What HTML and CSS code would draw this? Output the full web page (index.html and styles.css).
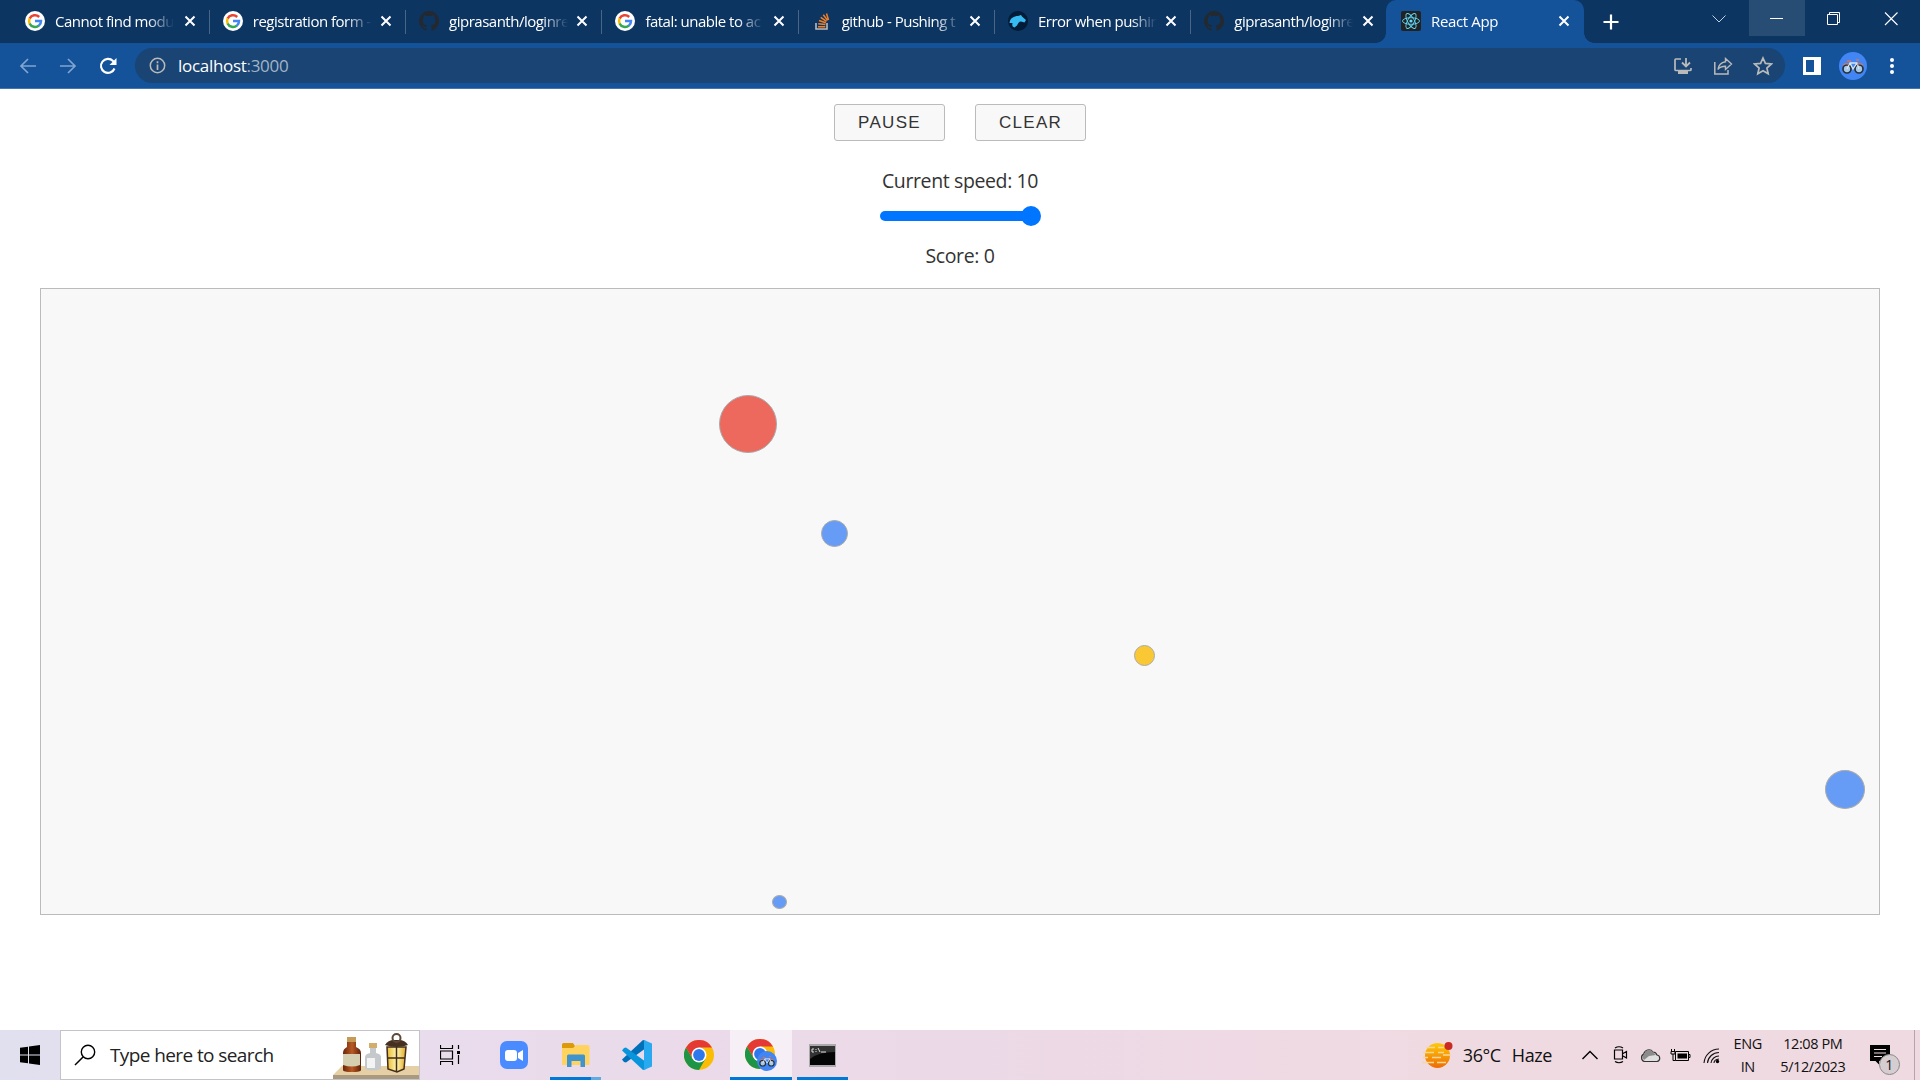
FILE: index.html
```html
<!DOCTYPE html>
<html lang="en">
<head>
<meta charset="utf-8">
<title>React App</title>
<link rel="stylesheet" href="styles.css">
</head>
<body>
<svg width="0" height="0" class="defs">
  <defs>
    <symbol id="google" viewBox="0 0 20 20"><circle cx="10" cy="10" r="10" fill="#fff"/><g fill="none" stroke-width="2.5"><path d="M14.2 6A6 6 0 0 0 4.6 7.6" stroke="#ea4335"/><path d="M4.7 7.4a6 6 0 0 0 0 5.2" stroke="#fbbc05"/><path d="M4.6 12.4a6 6 0 0 0 9.4 2.1" stroke="#34a853"/><path d="M10 10h6a6 6 0 0 1-2.1 4.6" stroke="#4285f4"/></g></symbol>
    <symbol id="github" viewBox="0 0 16 16"><path fill="#24292f" d="M8 0a8 8 0 0 0-2.53 15.59c.4.07.55-.17.55-.38v-1.49c-2 .37-2.53-.49-2.69-.94-.09-.23-.48-.94-.82-1.13-.28-.15-.68-.52-.01-.53.63-.01 1.08.58 1.23.82.72 1.21 1.87.87 2.33.66.07-.52.28-.87.51-1.07-1.78-.2-3.64-.89-3.64-3.95 0-.87.31-1.59.82-2.15-.08-.2-.36-1.02.08-2.12 0 0 .67-.21 2.2.82a7.6 7.6 0 0 1 4 0c1.53-1.04 2.2-.82 2.2-.82.44 1.1.16 1.92.08 2.12.51.56.82 1.27.82 2.15 0 3.07-1.87 3.75-3.65 3.95.29.25.54.73.54 1.48v2.2c0 .21.15.46.55.38A8 8 0 0 0 8 0z"/></symbol>
    <symbol id="close" viewBox="0 0 12 12"><path d="M1.500 1.500l9 9m0-9l-9 9" fill="none" stroke="#fff" stroke-width="2"/></symbol>
    <symbol id="bike" viewBox="0 0 28 28"><circle cx="14" cy="14" r="14" fill="#4285f4"/><g fill="#a9c9e8" stroke="#263238" stroke-width="1.700"><circle cx="8" cy="17" r="4"/><circle cx="20" cy="17" r="4"/></g><path d="M8 17l3-6h7l2 6M11 11l3 6 4-6" fill="none" stroke="#d8e6ed" stroke-width="1.300"/><path d="M4 13q3-2.500 6-.5M18 12.500q3-2 6 .5M8 9h4M17 8h3" fill="none" stroke="#d87554" stroke-width="1.300"/></symbol>
    <symbol id="chrome" viewBox="0 0 30 30"><circle cx="15" cy="15" r="15" fill="#fbbc05"/><path d="M2 7.500A15 15 0 0 1 28 7.500H15L8.500 18.750z" fill="#e53935"/><path d="M2 7.500A15 15 0 0 0 15 30L21.500 18.750 15 22 8.500 18.750z" fill="#1e9447"/><circle cx="15" cy="15" r="7.500" fill="#fff"/><circle cx="15" cy="15" r="5.900" fill="#2f78eb"/></symbol>
  </defs>
</svg>

<header class="browser">
  <div class="tabstrip">
    <div class="tab"><svg class="fav"><use href="#google"/></svg><span class="label">Cannot find modu</span><svg class="x"><use href="#close"/></svg></div>
    <div class="tab"><svg class="fav"><use href="#google"/></svg><span class="label">registration form -</span><svg class="x"><use href="#close"/></svg></div>
    <div class="tab"><svg class="fav"><use href="#github"/></svg><span class="label">giprasanth/loginre</span><svg class="x"><use href="#close"/></svg></div>
    <div class="tab"><svg class="fav"><use href="#google"/></svg><span class="label">fatal: unable to ac</span><svg class="x"><use href="#close"/></svg></div>
    <div class="tab"><svg class="fav" viewBox="0 0 20 20"><path d="M4 12v6h11v-6" fill="none" stroke="#bcbbbb" stroke-width="1.600"/><path d="M6 15.700h7.300M6.200 12.700l7.200.8M7 9.500l6.800 2.200M8.700 6.300l5.800 4M11.300 3.800l4.300 5.600M14.500 2.500l2 6.500" stroke="#f48024" stroke-width="1.500"/></svg><span class="label">github - Pushing t</span><svg class="x"><use href="#close"/></svg></div>
    <div class="tab"><svg class="fav" viewBox="0 0 20 20"><circle cx="10" cy="10" r="10" fill="#021b36"/><path d="M1.500 12C2 7 6 5 10 5l3-1 1 1.500 4 3.500-1.500 2.500-3.500-1c-2 0-3 2-4 4l-2.500 2C4 16 4 14 4.500 12z" fill="#35baf1"/></svg><span class="label">Error when pushin</span><svg class="x"><use href="#close"/></svg></div>
    <div class="tab"><svg class="fav"><use href="#github"/></svg><span class="label">giprasanth/loginre</span><svg class="x"><use href="#close"/></svg></div>
    <div class="tab active"><svg class="fav" viewBox="0 0 20 20"><rect width="20" height="20" rx="2" fill="#222"/><g fill="none" stroke="#61dafb" stroke-width=".9"><ellipse cx="10" cy="10" rx="8.500" ry="3.300"/><ellipse cx="10" cy="10" rx="8.500" ry="3.300" transform="rotate(60 10 10)"/><ellipse cx="10" cy="10" rx="8.500" ry="3.300" transform="rotate(120 10 10)"/></g><circle cx="10" cy="10" r="1.600" fill="#61dafb"/></svg><span class="label">React App</span><svg class="x"><use href="#close"/></svg></div>
    <svg class="newtab" viewBox="0 0 16 16"><path d="M8 .5v15M.5 8h15" stroke="#fff" stroke-width="2.200"/></svg>
    <div class="wincontrols">
      <svg class="wc" viewBox="0 0 56 36"><path d="M19.500 15.500l6.500 6.500 6.500-6.500" fill="none" stroke="#c5d0dc"/></svg>
      <svg class="wc hover" viewBox="0 0 56 36"><path d="M21 18.500h13" stroke="#fff"/></svg>
      <svg class="wc" viewBox="0 0 56 36"><path d="M22.500 14.500h10v10h-10zM24.500 14v-1.500h10v10H33" fill="none" stroke="#fff"/></svg>
      <svg class="wc" viewBox="0 0 56 36"><path d="M24 12.500l12.500 12.500m0-12.500L24 25" stroke="#fff" stroke-width="1.100"/></svg>
    </div>
  </div>
  <div class="toolbar">
    <svg class="nav" viewBox="0 0 20 20"><path d="M18 10H3m7-7l-7 7 7 7" fill="none" stroke="#80a5d0" stroke-width="1.700"/></svg>
    <svg class="nav" viewBox="0 0 20 20"><path d="M2 10h15m-7-7l7 7-7 7" fill="none" stroke="#80a5d0" stroke-width="1.700"/></svg>
    <svg class="nav" viewBox="0 0 20 20"><path d="M16.500 12.500A7 7 0 1 1 15 5l2 2" fill="none" stroke="#fff" stroke-width="2.100"/><path d="M18.500 2v7h-7z" fill="#fff"/></svg>
    <div class="omnibox">
      <svg class="info" viewBox="0 0 17 17"><circle cx="8.500" cy="8.500" r="7.200" fill="none" stroke="#bababa" stroke-width="1.500"/><path d="M8.500 7.500V13M8.500 4.300v1.900" stroke="#bababa" stroke-width="1.700"/></svg>
      <span class="url">localhost<span class="port">:3000</span></span>
      <svg class="act" viewBox="0 0 20 20"><path d="M8 3H2.800Q2 3 2 4v9.500q0 1 1 1h14q1 0 1-1V12" fill="none" stroke="#bababa" stroke-width="1.700"/><path d="M5 15h10v3H5z" fill="#bababa"/><path d="M13 2v8m-4-3.500l4 4 4-4" fill="none" stroke="#bababa" stroke-width="1.800"/></svg>
      <svg class="act" viewBox="0 0 20 20"><path d="M1.800 6v12H15v-4" fill="none" stroke="#bababa" stroke-width="1.500"/><path d="M12.500 2.500l6 5.500-6 5.500v-3.200c-3.500 0-6 .8-7.500 3.200.5-4 3-7 7.500-7.700z" fill="none" stroke="#bababa" stroke-width="1.400"/></svg>
      <svg class="act" viewBox="0 0 20 20"><path d="M10 2l2.400 5.400 6 .6-4.500 4 1.300 5.800L10 14.800l-5.200 3L6.100 12 1.600 8l6-.6z" fill="none" stroke="#bababa" stroke-width="1.700"/></svg>
    </div>
    <svg class="panel" viewBox="0 0 18 18"><path d="M0 0h18v18H0zM3 3v12h8V3z" fill="#fff" fill-rule="evenodd"/></svg>
    <svg class="avatar"><use href="#bike"/></svg>
    <svg class="menu" viewBox="0 0 4 16"><circle cx="2" cy="2" r="2" fill="#fff"/><circle cx="2" cy="8" r="2" fill="#fff"/><circle cx="2" cy="14" r="2" fill="#fff"/></svg>
  </div>
</header>

<main class="game">
  <div class="buttons"><button class="btn">PAUSE</button><button class="btn">CLEAR</button></div>
  <div class="speed">Current speed: 10</div>
  <div class="slider"><span class="thumb"></span></div>
  <div class="score">Score: 0</div>
  <div class="field">
    <span class="dot red"></span>
    <span class="dot blue-mid"></span>
    <span class="dot yellow"></span>
    <span class="dot blue-big"></span>
    <span class="dot blue-small"></span>
  </div>
</main>

<footer class="taskbar">
  <div class="start"><svg width="20" height="20" viewBox="0 0 20 20"><path d="M0 2.800L8 1.700v7.800H0zM9 1.500L20 0v9.500H9zM0 10.500h8v7.800l-8-1.100zM9 10.500h11V20L9 18.500z"/></svg></div>
  <div class="search">
    <svg width="22" height="22" viewBox="0 0 22 22"><circle cx="14" cy="8" r="6.700" fill="none" stroke="#000" stroke-width="1.400"/><path d="M9.300 12.700L1 21" stroke="#000" stroke-width="1.500"/></svg>
    <span class="placeholder">Type here to search</span>
    <svg class="art" width="86" height="48" viewBox="0 0 86 48">
      <defs><linearGradient id="amber"><stop offset="0" stop-color="#6a2508"/><stop offset=".5" stop-color="#b85a25"/><stop offset="1" stop-color="#5f2007"/></linearGradient><linearGradient id="glow"><stop offset="0" stop-color="#e9b931"/><stop offset=".5" stop-color="#fff7b0"/><stop offset="1" stop-color="#dfa827"/></linearGradient></defs>
      <path d="M9 35h77v9H0z" fill="#e6cfa4"/><path d="M0 44h86v5H0z" fill="#ab997f"/>
      <path d="M14 10h9v6q5 2 5 6v17q0 2-9 2t-9-2V22q0-4 4-6z" fill="url(#amber)"/><path d="M14 6h9v5h-9z" fill="#c69b58"/><path d="M10 23h17v11q-8 3-17 0z" fill="#d5ceb0"/>
      <path d="M37 17h6v5q5 1 5 4v12q-8 3-16 0V26q0-3 5-4z" fill="#c5c9cb"/><path d="M36 12h8v5h-8z" fill="#d3ad6c"/><path d="M34 27h8v10h-8z" fill="#f3f3f3"/>
      <path d="M54 16h19l-2 22-7 3-9-3z" fill="url(#glow)"/><path d="M54 16h19l-2 22-7 3-9-3zM63.500 16v24M54 27h18" fill="none" stroke="#432c1c" stroke-width="1.500"/><path d="M52 14q3-5 9-5h5q6 0 9 5-11 4-23 0z" fill="#46301f"/><circle cx="63.500" cy="7" r="4" fill="none" stroke="#5d4837" stroke-width="2"/>
    </svg>
  </div>
  <div class="apps">
    <div class="app taskview"><svg width="20" height="20" viewBox="0 0 20 20"><path d="M.5 0v3.500h12V0M.5 20v-3.500h12V20M.5 6h12v8H.5zM18.500 0v4M18.500 10v9" fill="none" stroke="#000" stroke-width="1.200"/><path d="M17 6h3v3h-3z"/></svg></div>
    <div class="app"><svg width="28" height="28" viewBox="0 0 28 28"><rect width="28" height="28" rx="7" fill="#4a8cff"/><rect x="5" y="9" width="12" height="11" rx="3" fill="#fff"/><path d="M18 12l5-3v11l-5-3z" fill="#fff"/></svg></div>
    <div class="app folder"><svg width="28" height="24" viewBox="0 0 28 24"><path d="M0 1.500Q0 0 1.500 0H11l2 3v4H0z" fill="#dc9a08"/><path d="M0 5h11l3-3h12q1.500 0 1.500 2v18H0z" fill="#ffd35d"/><path d="M5 24V13q0-1.500 1.500-1.500h15q1.500 0 1.500 1.500v11h-4.500v-6h-9v6z" fill="#3f94cf"/></svg></div>
    <div class="app"><svg width="30" height="30" viewBox="0 0 30 30"><path d="M0 19.500L21 0l3 1v7L4 22.500 2 22z" fill="#0071b9"/><path d="M0 10.500L21 30l3-1v-7L4 7.500 2 8z" fill="#0995dc"/><path d="M22 0l8 3.500v23L22 30z" fill="#29a9ef"/></svg></div>
    <div class="app"><svg width="30" height="30"><use href="#chrome"/></svg></div>
    <div class="app current"><svg width="32" height="32" viewBox="0 0 32 32"><use href="#chrome" width="30" height="30"/><use href="#bike" x="12" y="12" width="20" height="20"/></svg></div>
    <div class="app open"><svg width="27" height="23" viewBox="0 0 27 23"><path d="M0 0h27v23H0z" fill="#aaa"/><path d="M1 2h25v19H1z" fill="#050505"/><path d="M1 2h25v6Q9 8 1 15z" fill="#333"/><path d="M5 5H3v3h2M7 5v1m0 1v1M9 4l2 4M12 8h5" fill="none" stroke="#ddd"/></svg></div>
  </div>
  <div class="weather"><svg width="31" height="27" viewBox="0 0 31 27"><defs><linearGradient id="sun" x2="0" y2="1"><stop stop-color="#ffca08"/><stop offset="1" stop-color="#ed6b05"/></linearGradient></defs><circle cx="15.500" cy="13.500" r="12.500" fill="url(#sun)"/><path d="M4 5.500h9M16 5.500h6M1 10.500h11M16 10.500h6M10 15.500h9M1 15.500h5M0 20.500h12M15 20.500h9M21 13h8" stroke="#f8d79a" stroke-width="1.600"/><circle cx="26.500" cy="4" r="4" fill="#c92a22"/></svg><span class="temp">36°C</span><span class="haze">Haze</span></div>
  <div class="tray">
    <svg width="18" height="12" viewBox="0 0 18 12"><path d="M1.500 10L9 2.500l7.500 7.500" fill="none" stroke="#000" stroke-width="1.400"/></svg>
    <svg class="camera" width="15" height="18" viewBox="0 0 15 18"><path d="M1.500 4h8v9h-8zM10 7.500l3.500-2v6.500L10 10M2 2q4-2.500 8 0M2 15.500q4 2.500 8 0" fill="none" stroke="#000" stroke-width="1.200"/></svg>
    <svg class="cloud" width="21" height="15" viewBox="0 0 21 15"><path d="M4.500 13.500a4 4 0 0 1-.8-7.400C4.500 2 10 0 13 4q3 0 4 3a3.300 3.300 0 0 1 0 6.500z" fill="#e0e0e0" stroke="#333" stroke-width="1.200"/><path d="M2 9L6 3q4-3 7 1l3 3-7 1-5 4z" fill="#8c8c8c"/></svg>
    <svg class="battery" width="21" height="15" viewBox="0 0 21 15"><path d="M5.500 3.500h13v9h-13zM18.500 6.500h1.500v3h-1.500" fill="none" stroke="#000"/><path d="M7.500 5.500H17v5H7.500z"/><path d="M1 3.500h4v2.500H1zM1.500 1v2M4.500 1v2M3 6v6.500h2.500" fill="none" stroke="#000"/></svg>
    <svg class="wifi" width="17" height="17" viewBox="0 0 17 17"><path d="M1 16A15 15 0 0 1 16 2M4.500 16A11.500 11.500 0 0 1 16 5.500M8 16a8 8 0 0 1 8-7M11 16q0-3.500 5-4" fill="none" stroke="#111" stroke-width="1.100"/><circle cx="14.500" cy="14.500" r="1.700"/></svg>
  </div>
  <div class="lang"><span>ENG</span><span>IN</span></div>
  <div class="clock"><span class="time">12:08 PM</span><span class="date">5/12/2023</span></div>
  <div class="notify"><svg width="20" height="20" viewBox="0 0 20 20"><path d="M0 0h20v16H9v3.500L5.500 16H0z"/><path d="M4 4.500h12M4 8h12M4 11.500h8" stroke="#f0dae2" stroke-width="1.200"/></svg><span class="badge">1</span></div>
  <div class="showdesktop"></div>
</footer>
</body>
</html>
```
FILE: styles.css
```css
* { box-sizing: border-box; }
body { margin: 0; width: 1920px; height: 1080px; overflow: hidden; display: flex; flex-direction: column; background: #fff; font-family: "Open Sans", "Noto Sans", sans-serif; color: #333; }
svg { display: block; flex: none; }
.defs { position: absolute; }
.browser { flex: none; height: 89px; background: #14529a; border-bottom: 1px solid #4375ae; }
.tabstrip { height: 43px; display: flex; align-items: center; background: #0c3562; padding-left: 12px; }
.tab { width: 196.300px; height: 43px; flex: none; display: flex; align-items: center; padding: 0 14px 1px 13px; position: relative; }
.tab:first-child { width: 197.800px; }
.tab:nth-child(7) { width: 194.700px; padding-right: 12px; }
.tab::after { content: ""; position: absolute; right: 0; top: 10px; width: 1px; height: 24px; background: #4a6686; }
.tab:nth-child(7)::after, .tab.active::after { display: none; }
.fav { width: 20px; height: 20px; }
.label { width: 119px; flex: none; margin-left: 10px; overflow: hidden; white-space: nowrap; font-size: 15px; letter-spacing: -.5px; color: #fff; -webkit-mask-image: linear-gradient(90deg, #000 78%, transparent 100%); mask-image: linear-gradient(90deg, #000 78%, transparent 100%); }
.x { width: 12px; height: 12px; margin-left: auto; }
.tab.active { width: 198px; background: #14529a; border-radius: 10px 10px 0 0; padding-left: 15px; }
.tab.active .label { letter-spacing: -.35px; }
.tab.active::before { content: ""; position: absolute; left: -10px; right: -10px; bottom: 0; height: 10px; background: radial-gradient(circle at 0 0, transparent 9.500px, #14529a 10px) left/10px 10px no-repeat, radial-gradient(circle at 100% 0, transparent 9.500px, #14529a 10px) right/10px 10px no-repeat; }
.newtab { width: 16px; height: 16px; margin-left: 19px; }
.wincontrols { display: flex; margin-left: auto; margin-right: 3px; align-self: flex-start; }
.wc { width: 56px; height: 36px; }
.wc.hover { background: #284d75; }
.toolbar { height: 45px; display: flex; align-items: center; padding-left: 18px; }
.nav { width: 20px; height: 20px; margin-right: 20px; }
.omnibox { width: 1650px; height: 35px; border-radius: 18px; background: #194473; display: flex; align-items: center; padding: 0 12px 0 14px; margin-left: -3px; }
.info { width: 17px; height: 17px; }
.url { margin-left: 12px; margin-right: auto; font-size: 17px; letter-spacing: -.3px; color: #fff; }
.port { color: #a3b4c7; }
.act { width: 20px; height: 20px; margin-left: 20px; }
.panel { width: 18px; height: 18px; margin-left: 18px; }
.avatar { width: 28px; height: 28px; margin-left: 18px; }
.menu { width: 4px; height: 16px; margin-left: 23px; }

.game { flex: 1; display: flex; flex-direction: column; align-items: center; padding-top: 15px; }
.buttons { display: flex; gap: 30px; }
.btn { width: 111px; height: 37px; padding: 0; border: 1px solid #bbb; border-radius: 3px; background: #f8f8f8; color: #333; font: 17px "Liberation Sans", Arial, sans-serif; letter-spacing: 1.300px; }
.speed { margin-top: 26px; font-size: 19.500px; line-height: 28px; letter-spacing: -.38px; }
.slider { width: 161px; height: 10px; margin-top: 16px; display: flex; align-items: center; justify-content: flex-end; background: linear-gradient(#0075ff, #0075ff) left center/155px 10px no-repeat; border-radius: 5px; }
.thumb { flex: none; width: 20px; height: 20px; border-radius: 50%; background: #0075ff; }
.score { margin-top: 21px; font-size: 19.500px; line-height: 28px; letter-spacing: -.38px; }
.field { width: 1840px; height: 627px; margin-top: 18px; background: #f8f8f8; border: 1px solid #bbb; position: relative; }
.dot { position: absolute; border-radius: 50%; border: 1px solid #aaa; }
.red { left: 678px; top: 106px; width: 58px; height: 58px; background: #ed695e; }
.blue-mid { left: 780px; top: 231px; width: 27px; height: 27px; background: #679cf6; }
.yellow { left: 1093px; top: 356px; width: 21px; height: 21px; background: #f9c834; }
.blue-big { left: 1784px; top: 481px; width: 40px; height: 39px; background: #679cf6; }
.blue-small { left: 731px; top: 606px; width: 15px; height: 14px; background: #679cf6; }

.taskbar { flex: none; height: 50px; display: flex; align-items: center; color: #111; background: linear-gradient(90deg, #e1e0ef 0, #e9dcec 22%, #ecd9e7 50%, #f0dae2 75%, #f0dae1 100%); }
.start { width: 60px; display: flex; justify-content: center; }
.search { width: 360px; height: 50px; background: #fff; border: 1px solid #c4c4c8; display: flex; align-items: center; padding-left: 13px; }
.placeholder { margin-left: 14px; font-size: 19px; letter-spacing: -.6px; white-space: nowrap; color: #222; }
.art { margin-left: auto; }
.apps { display: flex; }
.app { width: 61.800px; height: 50px; display: flex; align-items: center; justify-content: center; }
.taskview { width: 63px; padding-right: 3px; }
.folder { background: linear-gradient(90deg, #0078d7 41px, #62aae2 41px) center bottom/51px 3px no-repeat; }
.current { background: #f7eff6; border-bottom: 3px solid #0078d7; padding-top: 3px; }
.open { background: linear-gradient(#0078d7, #0078d7) center bottom/51px 3px no-repeat; }
.weather { display: flex; align-items: center; margin-left: 568px; font-size: 18px; letter-spacing: -.4px; width: 159px; white-space: nowrap; }
.temp { margin-left: 10px; }
.haze { margin-left: 11px; }
.tray { display: flex; align-items: center; width: 151px; }
.camera { margin-left: 14px; }
.cloud { margin-left: 12px; }
.battery { margin-left: 9px; }
.wifi { margin-left: 12px; }
.lang, .clock { display: flex; flex-direction: column; align-items: center; font-size: 14.500px; line-height: 23px; letter-spacing: -.4px; white-space: nowrap; }
.lang { width: 32px; }
.clock { width: 70px; margin-left: 14px; }
.notify { position: relative; margin-left: 22px; }
.badge { position: absolute; left: 9px; top: 9px; width: 21px; height: 21px; border-radius: 50%; border: 1px solid #888; background: #d5cdd0; font-size: 14px; line-height: 19px; text-align: center; }
.showdesktop { width: 6px; height: 50px; margin-left: auto; border-left: 1px solid #b5a5ab; }
```
